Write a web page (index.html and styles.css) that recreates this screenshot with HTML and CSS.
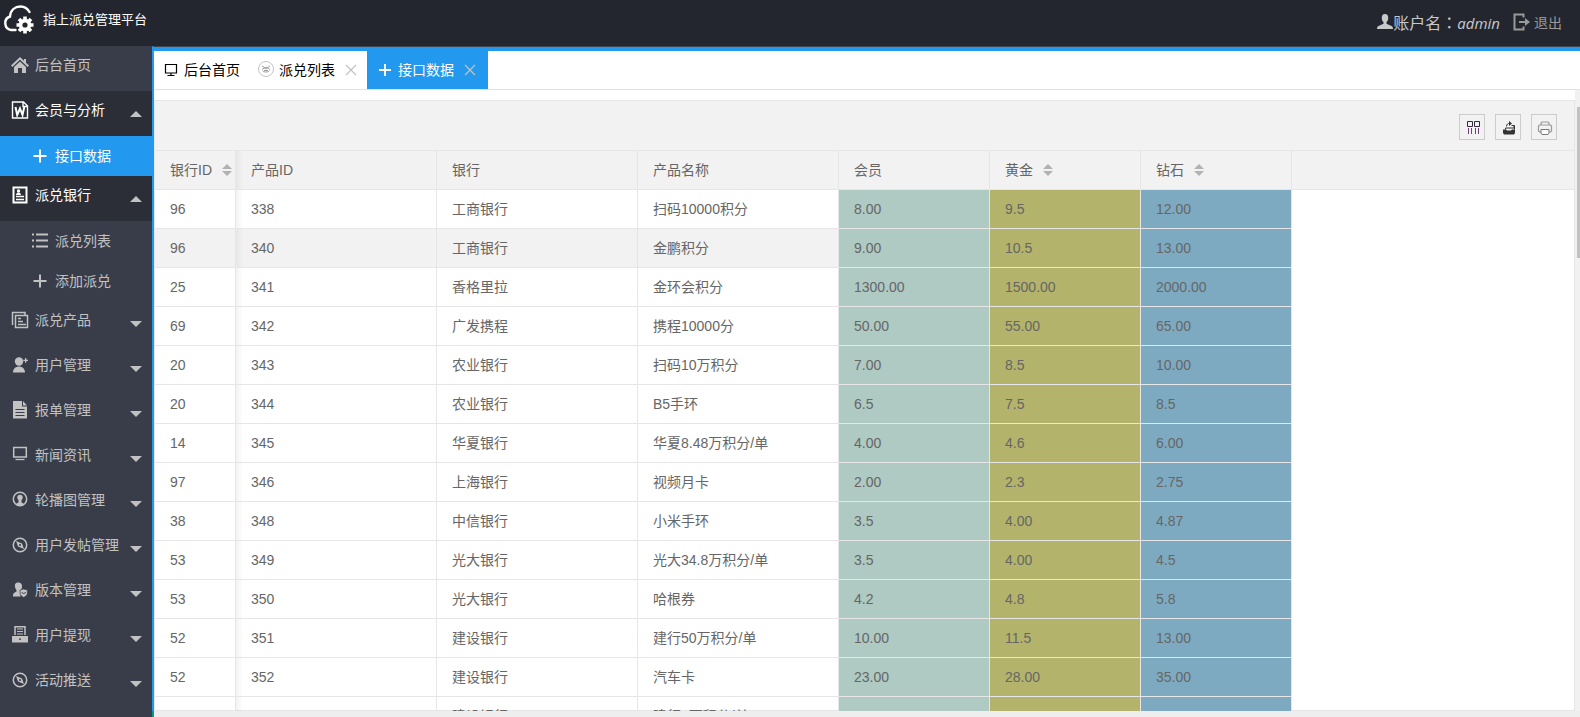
FILE: index.html
```html
<!DOCTYPE html>
<html lang="zh-CN">
<head>
<meta charset="utf-8">
<title>指上派兑管理平台</title>
<link rel="stylesheet" href="styles.css">
</head>
<body>
<div class="app">
  <header class="topbar">
    <div class="brand">
      <svg class="brand-logo" viewBox="0 0 32 30"><path d="M13 25H8.500A7 7 0 0 1 7.500 11.500C8 5 12.500 1.500 18 1.500c4 0 7 2 9 5.500" fill="none" stroke="#fff" stroke-width="2.400" stroke-linecap="round"/><g fill="#fff"><circle cx="22.500" cy="20" r="6.300"/><path d="M20.700 11.500h3.600v17h-3.600zM14 18.200h17v3.600H14z"/><path d="M20.700 11.500h3.600v17h-3.600zM14 18.200h17v3.600H14z" transform="rotate(45 22.500 20)"/></g><circle cx="22.500" cy="20" r="2.600" fill="#23262e"/></svg>
      <span>指上派兑管理平台</span>
    </div>
    <div class="account">
      <svg class="icon-user" viewBox="0 0 16 16"><path d="M8 0C5.500 0 4.600 2 4.800 4.500c.1 1.700.9 3 1.700 3.800v1.500L1.500 12C.4 12.500 0 13.500 0 15h16c0-1.500-.4-2.500-1.500-3l-5-2.200V8.300c.8-.8 1.600-2.100 1.700-3.800C11.400 2 10.500 0 8 0z" fill="currentColor"/></svg><span>账户名<span lang="zh-TW">：</span><em>admin</em></span>
      <a class="logout" href="#"><svg viewBox="0 0 18 18"><path d="M10.500 4.500V1.500h-9v15h9v-3M6 9h8" fill="none" stroke="currentColor" stroke-width="2"/><path d="M12 5v8l5-4z" fill="currentColor"/></svg>退出</a>
    </div>
  </header>

  <nav class="sidebar">
    <a class="nav-item" href="#"><svg viewBox="0 0 18 18"><path d="M9 1L0 9.500l1.300 1.400L9 3.800l7.700 7.100L18 9.500l-3-2.800V3h-2v1.800z" fill="currentColor"/><path d="M9 5.500l-6 5.600V17h4v-5h4v5h4v-5.900z" fill="currentColor"/></svg><span>后台首页</span></a>
    <a class="nav-item open" href="#"><svg viewBox="0 0 18 18"><path d="M1.500 1h11l4 4v12h-15zM12 1v4.500h4.500" fill="none" stroke="currentColor" stroke-width="1.400"/><path d="M4.500 6l1.700 8L9 7.500l2.500 6.500 1.800-8" fill="none" stroke="currentColor" stroke-width="2"/></svg><span>会员与分析</span><i class="caret up"></i></a>
    <a class="nav-sub active" href="#"><svg viewBox="0 0 16 16"><path d="M8 1.500v13M1.500 8h13" stroke="currentColor" stroke-width="2"/></svg><span>接口数据</span></a>
    <a class="nav-item open" href="#"><svg viewBox="0 0 18 18"><path d="M2.500 1.500h13v15h-13z" fill="none" stroke="currentColor" stroke-width="2"/><path d="M5 10.500h8M5 13.500h8" stroke="currentColor" stroke-width="1.400"/><circle cx="7.500" cy="5" r="1.700" fill="currentColor"/><path d="M5 9c0-3.500 5-3.500 5 0z" fill="currentColor"/></svg><span>派兑银行</span><i class="caret up"></i></a>
    <a class="nav-sub" href="#"><svg viewBox="0 0 16 16"><path d="M4 1.500h12M4 7.500h12M4 13.500h12M0 1.500h2M0 7.500h2M0 13.500h2" stroke="currentColor" stroke-width="1.800"/></svg><span>派兑列表</span></a>
    <a class="nav-sub" href="#"><svg viewBox="0 0 16 16"><path d="M8 1.500v13M1.500 8h13" stroke="currentColor" stroke-width="2"/></svg><span>添加派兑</span></a>
    <a class="nav-item" href="#"><svg viewBox="0 0 18 18"><path d="M4.500 4.500h12v12h-12zM1.500 14V1.500H14V4" fill="none" stroke="currentColor" stroke-width="1.500"/><path d="M7 7.500h3M7 10.500h5M7 13.500h8" stroke="currentColor" stroke-width="1.300"/></svg><span>派兑产品</span><i class="caret"></i></a>
    <a class="nav-item" href="#"><svg viewBox="0 0 18 18"><circle cx="8" cy="5.500" r="4.200" fill="currentColor"/><path d="M2 16.500c0-8 12-8 12 0zM14 2h1.300V3.700H17v1.300h-1.700v1.700H14V5h-1.700V3.700H14z" fill="currentColor"/></svg><span>用户管理</span><i class="caret"></i></a>
    <a class="nav-item" href="#"><svg viewBox="0 0 18 18"><path d="M2 0h9v5.500h5V17.500H2zM12 0l4 4.500h-4z" fill="currentColor"/><path d="M4.500 8.500h9M4.500 11.500h9M4.500 14.500h9" stroke="#393d49"/></svg><span>报单管理</span><i class="caret"></i></a>
    <a class="nav-item" href="#"><svg viewBox="0 0 18 18"><path d="M2.700 1.500h12.600v9.500H2.700z" fill="none" stroke="currentColor" stroke-width="1.500"/><path d="M4.500 13.500h9" stroke="currentColor" stroke-width="1.300"/></svg><span>新闻资讯</span><i class="caret"></i></a>
    <a class="nav-item" href="#"><svg viewBox="0 0 18 18"><circle cx="9" cy="8" r="6.700" fill="none" stroke="currentColor" stroke-width="1.500"/><circle cx="9" cy="6.500" r="2.700" fill="currentColor"/><path d="M7.500 8.500h3v3l2 1V14h-7v-1.500l2-1z" fill="currentColor"/></svg><span>轮播图管理</span><i class="caret"></i></a>
    <a class="nav-item" href="#"><svg viewBox="0 0 18 18"><circle cx="9" cy="9" r="6.700" fill="none" stroke="currentColor" stroke-width="1.500"/><path d="M5 5l6 2.500L13 13l-6-2.500z" fill="currentColor"/><circle cx="9" cy="9" r="1" fill="#393d49"/></svg><span>用户发帖管理</span><i class="caret"></i></a>
    <a class="nav-item" href="#"><svg viewBox="0 0 18 18"><path d="M7.500 1.500c-3 0-4 2-3.500 4 0 1.500.7 2.700 1.500 3.500v1.500L3 12c-.8.500-1 1.500-1 3.500h7.500V9.500L10.500 8c1-2 1-6.500-3-6.500z" fill="currentColor"/><path d="M9 9l3.700-1 3.700 1v3c0 2-1.700 3.300-3.700 4.500-2-1.200-3.700-2.500-3.700-4.500z" fill="currentColor" stroke="#393d49" stroke-width=".7"/><path d="M10.700 11l2 2 2-2" stroke="#393d49" fill="none"/></svg><span>版本管理</span><i class="caret"></i></a>
    <a class="nav-item" href="#"><svg viewBox="0 0 18 18"><path d="M4 9V.8h10V9" fill="none" stroke="currentColor" stroke-width="1.500"/><path d="M6 3h6M6 5.500h6M6 8h6" stroke="currentColor" stroke-width="1.200"/><path d="M1 10h16v6.500H1z" fill="currentColor"/><path d="M8 12.500h2v1.200H8z" fill="#393d49"/></svg><span>用户提现</span><i class="caret"></i></a>
    <a class="nav-item" href="#"><svg viewBox="0 0 18 18"><circle cx="9" cy="9" r="6.700" fill="none" stroke="currentColor" stroke-width="1.500"/><path d="M5 5l6 2.500L13 13l-6-2.500z" fill="currentColor"/><circle cx="9" cy="9" r="1" fill="#393d49"/></svg><span>活动推送</span><i class="caret"></i></a>
  </nav>

  <main class="main">
    <div class="tabs">
      <button class="tab" type="button"><svg class="tab-icon" viewBox="0 0 14 14"><path d="M1.500 1.500h11v8.500h-11zM7 10v2.500M3.500 12.500h7" fill="none" stroke="currentColor" stroke-width="1.200"/></svg>后台首页</button>
      <button class="tab second" type="button"><svg class="tab-face" viewBox="0 0 18 18"><circle cx="9" cy="8" r="7.500" fill="none" stroke="#c4c4c4"/><path d="M5 5l2.500 1.500h3L13 5M5 8.500l2.200-1.500L9 8l1.800-1L13 8.500M5.500 9.500c1 2 6 2 7 0M7 9.500h4" fill="none" stroke="#888" stroke-width=".8"/></svg>派兑列表<svg class="tab-close" viewBox="0 0 12 12"><path d="M1 1l10 10M11 1L1 11" stroke="currentColor" stroke-width="1.200"/></svg></button>
      <button class="tab current" type="button"><svg class="tab-icon" viewBox="0 0 14 14"><path d="M7 1v12M1 7h12" stroke="currentColor" stroke-width="1.800"/></svg>接口数据<svg class="tab-close" viewBox="0 0 12 12"><path d="M1 1l10 10M11 1L1 11" stroke="currentColor" stroke-width="1.200"/></svg></button>
    </div>
    <div class="page">
      <section class="panel">
        <div class="toolbar">
          <button class="tool" type="button" aria-label="筛选列"><svg viewBox="0 0 16 16"><path d="M2.500 1.500h5v5h-5zM9.500 1.500h5v5h-5z" fill="none" stroke="#332838"/><path d="M3.500 8v6M6.500 8v6M10.500 8v6M13.500 8v6" stroke="#7a3a86"/></svg></button>
          <button class="tool" type="button" aria-label="导出"><svg viewBox="0 0 16 16"><path d="M2 9.500h3l1 1h4l1-1h3V13l-1 1.500H3L2 13z" fill="#333"/><path d="M4.500 9.500V8h8.500V5.500M5.500 6.500C5.500 4 7 3.500 9 3.500M13.500 9.500V5.500h-3" fill="none" stroke="#333"/><path d="M8 1l3 2.500L8 6z" fill="#333"/></svg></button>
          <button class="tool" type="button" aria-label="打印"><svg viewBox="0 0 16 16"><path d="M4 5V3l1-1h6l1 1v2M4 12H2.500L1.500 11V6l1-1h11l1 1v5l-1 1H12" fill="none" stroke="#999" stroke-width="1.200"/><path d="M4 9.500h8V13l-1 1.500H5L4 13z" fill="#fff" stroke="#777"/></svg></button>
        </div>
        <table class="grid">
          <colgroup><col class="c-id"><col class="c-wide"><col class="c-wide"><col class="c-wide"><col class="c-price"><col class="c-price"><col class="c-price"><col></colgroup>
          <thead><tr><th>银行ID<i class="sort"></i></th><th>产品ID</th><th>银行</th><th>产品名称</th><th>会员</th><th>黄金<i class="sort"></i></th><th>钻石<i class="sort"></i></th><th class="rest"></th></tr></thead>
          <tbody>
            <tr><td>96</td><td>338</td><td>工商银行</td><td>扫码10000积分</td><td>8.00</td><td>9.5</td><td>12.00</td></tr>
            <tr class="hover"><td>96</td><td>340</td><td>工商银行</td><td>金鹏积分</td><td>9.00</td><td>10.5</td><td>13.00</td></tr>
            <tr><td>25</td><td>341</td><td>香格里拉</td><td>金环会积分</td><td>1300.00</td><td>1500.00</td><td>2000.00</td></tr>
            <tr><td>69</td><td>342</td><td>广发携程</td><td>携程10000分</td><td>50.00</td><td>55.00</td><td>65.00</td></tr>
            <tr><td>20</td><td>343</td><td>农业银行</td><td>扫码10万积分</td><td>7.00</td><td>8.5</td><td>10.00</td></tr>
            <tr><td>20</td><td>344</td><td>农业银行</td><td>B5手环</td><td>6.5</td><td>7.5</td><td>8.5</td></tr>
            <tr><td>14</td><td>345</td><td>华夏银行</td><td>华夏8.48万积分/单</td><td>4.00</td><td>4.6</td><td>6.00</td></tr>
            <tr><td>97</td><td>346</td><td>上海银行</td><td>视频月卡</td><td>2.00</td><td>2.3</td><td>2.75</td></tr>
            <tr><td>38</td><td>348</td><td>中信银行</td><td>小米手环</td><td>3.5</td><td>4.00</td><td>4.87</td></tr>
            <tr><td>53</td><td>349</td><td>光大银行</td><td>光大34.8万积分/单</td><td>3.5</td><td>4.00</td><td>4.5</td></tr>
            <tr><td>53</td><td>350</td><td>光大银行</td><td>哈根券</td><td>4.2</td><td>4.8</td><td>5.8</td></tr>
            <tr><td>52</td><td>351</td><td>建设银行</td><td>建行50万积分/单</td><td>10.00</td><td>11.5</td><td>13.00</td></tr>
            <tr><td>52</td><td>352</td><td>建设银行</td><td>汽车卡</td><td>23.00</td><td>28.00</td><td>35.00</td></tr>
            <tr><td></td><td></td><td>建设银行</td><td>建行5万积分/单</td><td></td><td></td><td></td></tr>
          </tbody>
        </table>
      </section>
      <div class="scrollbar"><div class="thumb"></div></div>
    </div>
    <footer class="footer"></footer>
  </main>
</div>
</body>
</html>
```
FILE: styles.css
```css
* { box-sizing: border-box; }
body { margin: 0; overflow: hidden; font: 14px/20px "Liberation Sans", "Noto Sans CJK SC", sans-serif; color: #666; }
a { color: inherit; text-decoration: none; }
button { font: inherit; color: inherit; border: 0; background: none; padding: 0; }
svg { display: block; flex: none; }

.app { height: 100vh; display: grid; grid-template: 46px minmax(0, 1fr) / 152px minmax(0, 1fr); }

.topbar { grid-column: 1 / -1; display: flex; justify-content: space-between; background: #23262e; }
.brand { display: flex; align-items: center; gap: 8px; padding: 0 0 6px 2px; color: #fff; font-size: 13px; }
.brand-logo { width: 33px; height: 30px; }
.account { display: flex; align-items: center; padding: 0 18px 2px 0; color: #c8c9cb; font-size: 16px; font-family: "Noto Sans CJK SC", sans-serif; }
.account [lang] { font-family: "Noto Sans CJK TC", sans-serif; }
.account em { font-family: "Open Sans", sans-serif; font-size: 15px; }
.icon-user { width: 16px; height: 16px; }
.logout { display: flex; align-items: center; gap: 3px; margin-left: 13px; color: #999; font-size: 14px; }
.logout svg { width: 18px; height: 18px; }

.sidebar { background: #393d49; color: #c2c2c2; overflow: hidden; }
.nav-item { display: flex; align-items: center; height: 45px; padding: 0 10px 8px 11px; gap: 6px; }
.nav-item svg { width: 18px; height: 18px; }
.nav-item.open { background: #2b2e37; color: #fff; }
.nav-sub { display: flex; align-items: center; height: 40px; padding: 0 0 1px 32px; gap: 7px; }
.nav-sub svg { width: 16px; height: 16px; }
.nav-sub.active { background: #2299ee; color: #fff; }
.caret { margin: 8px 0 0 auto; border: 6px solid transparent; border-top-color: #c2c2c2; border-bottom-width: 0; }
.caret.up { border-width: 0 6px 6px; border-bottom-color: #c2c2c2; }

.main { display: flex; flex-direction: column; min-width: 0; min-height: 0; border-left: 2px solid #2299ee; border-top: 1px solid #41444f; background: #fff; }
.tabs { display: flex; flex: none; height: 43px; border-top: 4px solid #2299ee; border-bottom: 1px solid #e2e2e2; color: #000; }
.tab { display: flex; align-items: center; gap: 6px; padding: 0 10px; }
.tab.second { gap: 4px; padding-left: 7px; }
.tab.current { background: #2299ee; color: #fff; padding: 0 12px 0 11px; }
.tab-icon { width: 14px; height: 14px; }
.tab-face { width: 18px; height: 18px; }
.tab-close { width: 12px; height: 12px; margin-left: 6px; color: #c2c2c2; }
.current .tab-close { margin-left: 4px; }

.page { flex: 1; display: flex; min-height: 0; overflow: hidden; }
.panel { flex: 1; min-width: 0; margin-top: 10px; border: 1px solid #e6e6e6; }
.toolbar { display: flex; justify-content: flex-end; align-items: center; gap: 10px; height: 50px; padding: 3px 17px 0 0; background: #f2f2f2; border-bottom: 1px solid #e6e6e6; }
.tool { width: 26px; height: 26px; border: 1px solid #ccc; display: flex; align-items: center; justify-content: center; padding: 2px 0 0 2px; }
.tool svg { width: 16px; height: 16px; }

.grid { width: 100%; table-layout: fixed; border-collapse: separate; border-spacing: 0; }
.c-id { width: 81px; }
.c-wide { width: 201px; }
.c-price { width: 151px; }
th, td { height: 39px; padding: 0 0 0 15px; border: 0 solid #e6e6e6; border-width: 0 1px 1px 0; text-align: left; font-weight: 400; white-space: nowrap; }
th { background: #f2f2f2; }
th.rest { border-right: 0; }
.hover td { background: #f2f2f2; }
th:nth-child(2), td:nth-child(2) { background-image: linear-gradient(to right, rgba(0, 0, 0, .05), rgba(0, 0, 0, 0) 7px); }
tbody td:nth-child(5) { background: #afc9c3; }
tbody td:nth-child(6) { background: #b3b36b; }
tbody td:nth-child(7) { background: #7eaac1; }
.sort { display: inline-flex; flex-direction: column; gap: 2px; margin: 0 0 2px 10px; vertical-align: middle; }
.sort::before, .sort::after { content: ""; border: 5px solid transparent; }
.sort::before { border-top-width: 0; border-bottom-color: #b2b2b2; }
.sort::after { border-bottom-width: 0; border-top-color: #b2b2b2; }

.scrollbar { width: 5px; padding: 17px 0 0 2px; background: #f1f1f1; }
.thumb { height: 151px; background: #c1c1c1; }
.footer { flex: none; height: 6px; margin-left: -2px; background: #eee; border-left: 2px solid #009688; }
```
